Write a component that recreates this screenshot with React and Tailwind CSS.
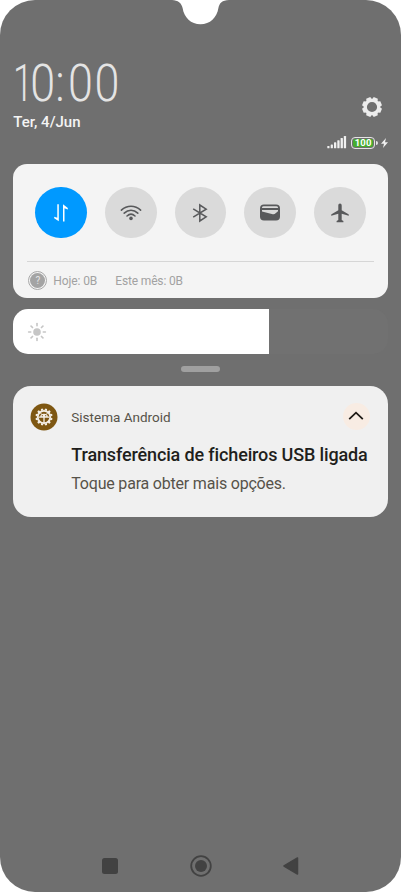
import React from 'react';

const GEAR_TEETH = [0, 45, 90, 135, 180, 225, 270, 315];
const BADGE_TEETH = [0, 30, 60, 90, 120, 150, 180, 210, 240, 270, 300, 330];

const Notch = () => (
  <svg className="absolute left-[172px] top-0" width="57" height="25" viewBox="0 0 57 25">
    <path d="M0 0C6 0.3 9.5 3 10.6 8C12 17.5 19 24.3 28.5 24.3C38 24.3 45 17.5 46.4 8C47.5 3 50 0.3 57 0Z" fill="#fff" />
  </svg>
);

const SettingsIcon = () => (
  <svg width="22" height="22" viewBox="-11 -11 22 22">
    {GEAR_TEETH.map((angle) => (
      <path key={angle} d="M-3 -7L-2.2 -9.9H2.2L3 -7Z" fill="#ececec" transform={`rotate(${angle + 22.5})`} />
    ))}
    <circle r="6.7" fill="none" stroke="#ececec" strokeWidth="3.2" />
  </svg>
);

const SignalIcon = () => (
  <svg width="20" height="13" viewBox="0 0 20 13" fill="#f0f0f0">
    <rect x="0.3" y="10" width="2.2" height="2.3" rx="0.6" />
    <rect x="3.7" y="8.5" width="2.2" height="3.8" rx="0.6" />
    <rect x="7" y="6.3" width="2.3" height="6" rx="0.6" />
    <rect x="10.3" y="4.2" width="2.3" height="8.1" rx="0.6" />
    <rect x="13.6" y="2" width="2.3" height="10.3" rx="0.6" />
    <rect x="16.8" y="0" width="2.3" height="12.3" rx="0.6" />
  </svg>
);

const Battery = () => (
  <div className="flex items-center">
    <div className="flex h-[12px] w-[24px] items-center justify-center rounded-[4px] border border-[#e4e4e4] p-px">
      <div className="flex h-full w-full items-center justify-center rounded-[2px] bg-[#46ad2e] text-[9.5px] font-bold leading-none tracking-[0.2px] text-white">
        100
      </div>
    </div>
    <div className="ml-px h-1 w-[1.5px] rounded-r bg-[#e4e4e4]" />
  </div>
);

const DataIcon = () => (
  <svg width="16" height="20" viewBox="0 0 16 20" fill="#fff">
    <path d="M4.3 1.2H5.8V18.2L1.2 15.2V13.8L4.3 14.8Z" />
    <path d="M10 18.4H11.5V5.2L14.8 6.4V5L10 1.2Z" />
  </svg>
);

const WifiIcon = () => (
  <svg width="22" height="18" viewBox="0 0 22 18" fill="none" stroke="#58595b" strokeWidth="1.6" strokeLinecap="round">
    <path d="M1.4 6.2C7 1 15 1 20.6 6.2" />
    <path d="M4.2 9.1C8.3 5.3 13.7 5.3 17.8 9.1" />
    <path d="M7 12C9.4 9.8 12.6 9.8 15 12" />
    <circle cx="11" cy="14.4" r="1.8" fill="#58595b" stroke="none" />
  </svg>
);

const BluetoothIcon = () => (
  <svg width="18" height="20" viewBox="0 0 18 20" fill="none" stroke="#58595b" strokeWidth="1.5">
    <path d="M2.2 5.8L15.2 13.8L8.8 18V2L15.2 6.2L2.2 14.2" />
  </svg>
);

const WalletIcon = () => (
  <svg width="20" height="17" viewBox="0 0 20 17">
    <rect x="0" y="0.4" width="20" height="16.2" rx="4" fill="#58595b" />
    <path d="M2 3.6Q2.2 2.3 3.6 2.3H16.4Q17.8 2.3 18 3.6V4H2Z" fill="#dadada" />
    <path d="M2 6H18V7.3L15.6 9.2Q14.5 10.6 12.8 10.3L2 7.4Z" fill="#dadada" />
  </svg>
);

const PlaneIcon = () => (
  <svg width="18" height="20" viewBox="0 0 18 20" fill="#58595b">
    <path d="M9 0.5C10 0.5 10.7 1.3 10.7 2.5V7.3L17.5 11.2Q18.1 11.8 17.7 12.8L10.7 10.8V17L12.4 18V19.3H5.6V18L7.3 17V10.8L0.3 12.8Q-0.1 11.8 0.5 11.2L7.3 7.3V2.5C7.3 1.3 8 0.5 9 0.5Z" />
  </svg>
);

const SunIcon = () => (
  <svg width="20" height="20" viewBox="-10 -10 20 20" fill="#c6c6c6">
    <circle r="3.8" />
    {GEAR_TEETH.map((angle) => (
      <rect key={angle} x="-0.8" y="-9.2" width="1.6" height="3.7" rx="0.8" transform={`rotate(${angle})`} />
    ))}
  </svg>
);

const SystemBadge = () => (
  <svg width="28" height="28" viewBox="-14 -14 28 28">
    <circle r="13.5" fill="#7e5712" />
    {BADGE_TEETH.map((angle) => (
      <path key={angle} d="M-1.5 -6.5L-0.8 -8.6H0.8L1.5 -6.5Z" fill="#f4efe6" transform={`rotate(${angle + 15})`} />
    ))}
    <circle r="6.2" fill="none" stroke="#f4efe6" strokeWidth="1.7" />
    <path d="M-5.5 0.2H5.5M0 0V6" stroke="#f4efe6" strokeWidth="1.3" />
    <path d="M-3.8 0Q-3.8 -3.2 0 -3.2Q3.8 -3.2 3.8 0Z" fill="#f4efe6" />
    <path d="M-3.8 -4.3L-2.2 -2.5M3.8 -4.3L2.2 -2.5" stroke="#f4efe6" strokeWidth="1" />
    <circle cx="-1.7" cy="-1.3" r="0.6" fill="#7e5712" />
    <circle cx="1.7" cy="-1.3" r="0.6" fill="#7e5712" />
  </svg>
);

const toggles = [
  { name: 'data', icon: <DataIcon />, active: true },
  { name: 'wifi', icon: <WifiIcon /> },
  { name: 'bluetooth', icon: <BluetoothIcon /> },
  { name: 'wallet', icon: <WalletIcon /> },
  { name: 'plane', icon: <PlaneIcon /> },
];

const Header = () => (
  <header className="flex h-[164.4px] flex-col pt-[57.6px]">
    <div className="flex h-[76.4px] justify-between">
      <div>
        <div className="flex h-[51px] w-[130px] origin-left scale-x-[0.88] text-[51px] font-light leading-[51px] text-[#e4e4e4]">
          <span className="-ml-[4px] mr-[3px] w-[20.5px] origin-right scale-x-[0.8]">1</span>
          <span className="w-[28.5px]">0</span>
          <span className="w-[14.5px]">:</span>
          <span className="w-[30px]">0</span>
          <span>0</span>
        </div>
        <p className="mt-[3px] text-[15px] font-medium leading-5 text-[#f4f4f4]">Ter, 4/Jun</p>
      </div>
      <div className="mr-[5px] mt-[38.4px]">
        <SettingsIcon />
      </div>
    </div>
    <div className="mt-[2px] flex h-[14px] items-center justify-end">
      <SignalIcon />
      <div className="ml-[4px]">
        <Battery />
      </div>
      <svg className="ml-[3px]" width="7" height="10" viewBox="0 0 7 10">
        <path d="M5 0L0 5.8H3L2 10L7 4.2H4Z" fill="#f0f0f0" />
      </svg>
    </div>
  </header>
);

const QuickSettings = () => (
  <section className="h-[134px] rounded-[14px] bg-[#f4f4f4] px-[14px] pt-[22.5px]">
    <div className="flex justify-between px-[8px]">
      {toggles.map((toggle) => (
        <button
          key={toggle.name}
          className={`flex h-[51.5px] w-[51.5px] items-center justify-center rounded-full ${toggle.active ? 'bg-[#0099ff]' : 'bg-[#dadada]'}`}
        >
          {toggle.icon}
        </button>
      ))}
    </div>
    <div className="mt-[22.5px] h-px bg-[#d6d6d6]" />
    <div className="flex h-[38px] items-center text-[12px] text-[#a2a2a2]">
      <div className="ml-px flex h-[19px] w-[19px] items-center justify-center rounded-full border border-[#a8a8a8] p-px">
        <span className="flex h-full w-full items-center justify-center rounded-full bg-[#a4a4a4] text-[10px] leading-none text-[#e4e4e4]">?</span>
      </div>
      <span className="ml-[6px] tracking-[-0.1px]">Hoje: 0B</span>
      <span className="ml-[18px] tracking-[-0.15px]">Este mês: 0B</span>
    </div>
  </section>
);

const Notification = () => (
  <section className="mt-[14px] h-[131px] rounded-[18px] bg-[#f0f0f0] px-[17px] pt-[16.7px]">
    <div className="flex h-[28px] items-center">
      <SystemBadge />
      <span className="ml-[13px] pt-px text-[13.5px] text-[#57534a]">Sistema Android</span>
      <div className="ml-auto mr-px flex h-[27px] w-[27px] items-center justify-center rounded-full bg-[#f8ece3]">
        <svg className="-mt-[2px]" width="16" height="10" viewBox="0 0 16 10" fill="none" stroke="#1f1b16" strokeWidth="1.8">
          <path d="M1.2 8.2L8 1.7L14.8 8.2" />
        </svg>
      </div>
    </div>
    <h2 className="ml-[41px] mt-[12px] whitespace-nowrap text-[18px] font-medium leading-6 tracking-[-0.14px] text-[#1f1f1c]">
      Transferência de ficheiros USB ligada
    </h2>
    <p className="ml-[41px] mt-[5px] text-[16px] leading-6 tracking-[-0.2px] text-[#57534a]">Toque para obter mais opções.</p>
  </section>
);

const NavBar = () => (
  <nav className="mt-auto flex h-[53px] items-center justify-between px-[89px]">
    <div className="h-4 w-4 rounded-[2.5px] bg-[#424242]" />
    <svg width="22" height="22" viewBox="0 0 22 22">
      <circle cx="11" cy="11" r="9.8" fill="none" stroke="#424242" strokeWidth="1.8" />
      <circle cx="11" cy="11" r="6" fill="#424242" />
    </svg>
    <svg width="16" height="20" viewBox="0 0 16 20">
      <path d="M14.5 2V18L1 10Z" fill="#424242" stroke="#424242" strokeWidth="1.5" strokeLinejoin="round" />
    </svg>
  </nav>
);

export default function App() {
  return (
    <div className="h-[892px] w-[401px] overflow-hidden bg-white font-['Roboto',sans-serif]">
      <div className="relative flex h-full flex-col rounded-[35px] bg-[#6f6f6f] px-[13.3px]">
        <Notch />
        <Header />
        <QuickSettings />
        {/* Brightness */}
        <div className="mt-[11px] h-[44.5px] overflow-hidden rounded-[15px] bg-[#717171]">
          <div className="flex h-full w-[255.7px] items-center bg-white pl-[13.5px]">
            <SunIcon />
          </div>
        </div>
        <div className="mt-[12px] h-[6px] w-[39px] self-center rounded-full bg-[#a0a0a0]" />
        <Notification />
        <NavBar />
      </div>
    </div>
  );
}
